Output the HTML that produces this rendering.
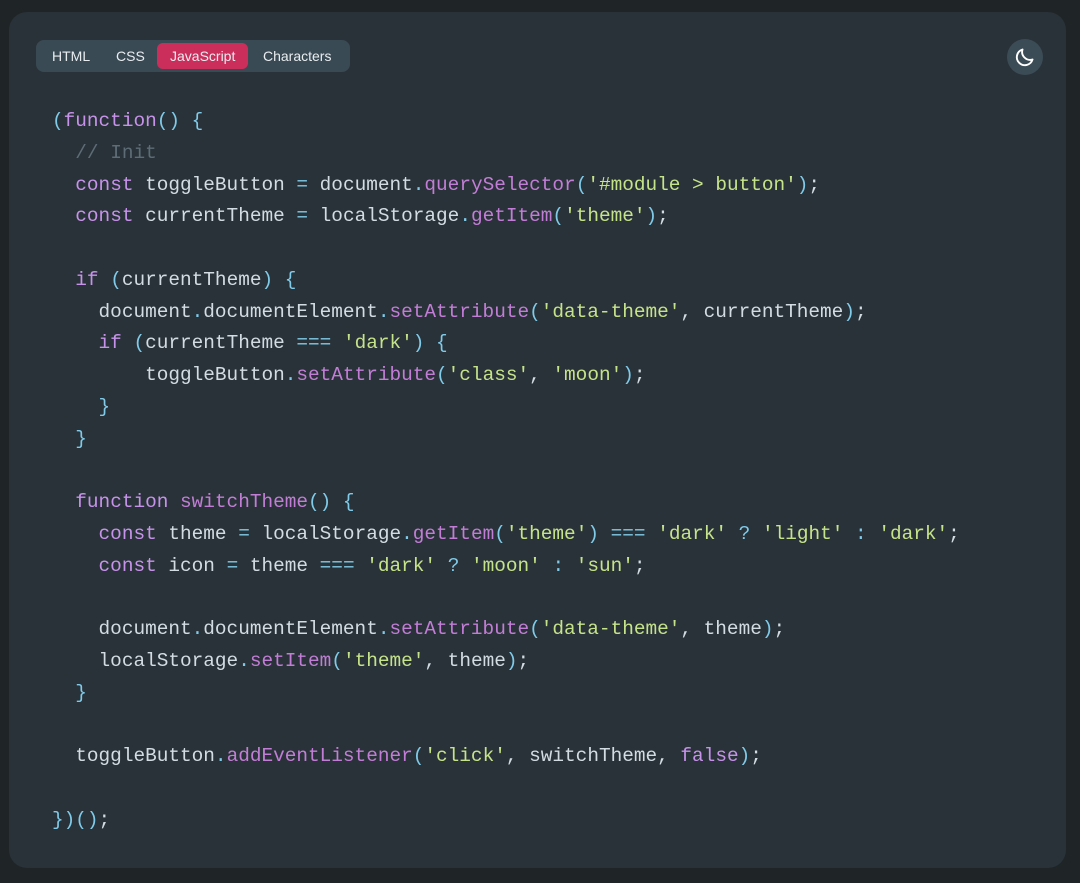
<!DOCTYPE html><html><head><style>
body{margin:0;width:1080px;height:883px;background:#1f2427;font-family:"Liberation Sans",sans-serif;overflow:hidden}
.card{position:absolute;left:9px;top:12px;width:1057px;height:856px;background:#293238;border-radius:18px}
.tabs{position:absolute;left:27px;top:28px;width:314px;height:32px;background:#3a4a54;border-radius:8px}
.tab{position:absolute;top:3px;height:26px;line-height:27px;color:#e8edf0;font-size:14px;border-radius:6px}
.act{background:#cc2e5c;padding:0 13px}
.moon{position:absolute;left:998px;top:27px;width:36px;height:36px;border-radius:50%;background:#3c4c56}
pre{position:absolute;left:43px;top:94px;margin:0;font-family:"Liberation Mono",monospace;font-size:19.4px;line-height:31.75px;color:#d3dbe3}
.p{color:#7fcbe9}.k{color:#c792ea}.m{color:#c27dd6}.s{color:#c5e38a}.c{color:#5d6c76}
</style></head><body><div class="card">
<div class="tabs">
<div class="tab" style="left:16px">HTML</div>
<div class="tab" style="left:80px">CSS</div>
<div class="tab act" style="left:121px">JavaScript</div>
<div class="tab" style="left:227px">Characters</div>
</div>
<div class="moon"><svg width="36" height="36" viewBox="0 0 36 36"><path d="M25.5 20.5A8 8 0 0 1 15.5 10.5a8 8 0 1 0 10 10z" fill="none" stroke="#fff" stroke-width="1.9" stroke-linejoin="round"/></svg></div>
<pre><span class="p">(</span><span class="k">function</span><span class="p">() {</span>
  <span class="c">// Init</span>
  <span class="k">const</span> toggleButton <span class="p">=</span> document<span class="p">.</span><span class="m">querySelector</span><span class="p">(</span><span class="s">'#module &gt; button'</span><span class="p">)</span>;
  <span class="k">const</span> currentTheme <span class="p">=</span> localStorage<span class="p">.</span><span class="m">getItem</span><span class="p">(</span><span class="s">'theme'</span><span class="p">)</span>;

  <span class="k">if</span> <span class="p">(</span>currentTheme<span class="p">) {</span>
    document<span class="p">.</span>documentElement<span class="p">.</span><span class="m">setAttribute</span><span class="p">(</span><span class="s">'data-theme'</span>, currentTheme<span class="p">)</span>;
    <span class="k">if</span> <span class="p">(</span>currentTheme <span class="p">===</span> <span class="s">'dark'</span><span class="p">) {</span>
        toggleButton<span class="p">.</span><span class="m">setAttribute</span><span class="p">(</span><span class="s">'class'</span>, <span class="s">'moon'</span><span class="p">)</span>;
    <span class="p">}</span>
  <span class="p">}</span>

  <span class="k">function</span> <span class="m">switchTheme</span><span class="p">() {</span>
    <span class="k">const</span> theme <span class="p">=</span> localStorage<span class="p">.</span><span class="m">getItem</span><span class="p">(</span><span class="s">'theme'</span><span class="p">)</span> <span class="p">===</span> <span class="s">'dark'</span> <span class="p">?</span> <span class="s">'light'</span> <span class="p">:</span> <span class="s">'dark'</span>;
    <span class="k">const</span> icon <span class="p">=</span> theme <span class="p">===</span> <span class="s">'dark'</span> <span class="p">?</span> <span class="s">'moon'</span> <span class="p">:</span> <span class="s">'sun'</span>;

    document<span class="p">.</span>documentElement<span class="p">.</span><span class="m">setAttribute</span><span class="p">(</span><span class="s">'data-theme'</span>, theme<span class="p">)</span>;
    localStorage<span class="p">.</span><span class="m">setItem</span><span class="p">(</span><span class="s">'theme'</span>, theme<span class="p">)</span>;
  <span class="p">}</span>

  toggleButton<span class="p">.</span><span class="m">addEventListener</span><span class="p">(</span><span class="s">'click'</span>, switchTheme, <span class="k">false</span><span class="p">)</span>;

<span class="p">})()</span>;</pre>
</div></body></html>
